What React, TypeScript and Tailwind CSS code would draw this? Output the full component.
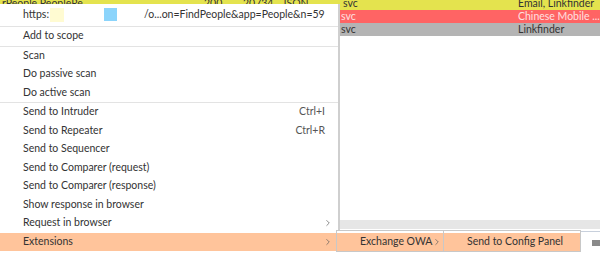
import { ChevronRight } from 'lucide-react'

type Item = { label: string; shortcut?: string; sub?: boolean; active?: boolean }

const groups: Item[][] = [
  [{ label: 'Add to scope' }],
  [{ label: 'Scan' }, { label: 'Do passive scan' }, { label: 'Do active scan' }],
  [
    { label: 'Send to Intruder', shortcut: 'Ctrl+I' },
    { label: 'Send to Repeater', shortcut: 'Ctrl+R' },
    { label: 'Send to Sequencer' },
    { label: 'Send to Comparer (request)' },
    { label: 'Send to Comparer (response)' },
    { label: 'Show response in browser' },
    { label: 'Request in browser', sub: true },
    { label: 'Extensions', sub: true, active: true },
  ],
]

const font = { fontFamily: 'Lato, "Noto Sans", sans-serif' }

function Arrow() {
  return <ChevronRight size={10} strokeWidth={1.6} className="shrink-0 text-[#555]" />
}

function MenuRow({ item }: { item: Item }) {
  return (
    <div
      className={`flex h-[18.5px] items-center whitespace-nowrap pl-[23px] pr-[5px] ${
        item.active ? 'bg-[#ffc49b]' : ''
      }`}
    >
      <span className="flex-1">{item.label}</span>
      {item.shortcut && <span className="pr-[8px] text-[#555]">{item.shortcut}</span>}
      {item.sub && <Arrow />}
    </div>
  )
}

export default function App() {
  return (
    <div
      className="relative h-[253px] w-[600px] overflow-hidden bg-white text-[10.5px] text-[#333]"
      style={font}
    >
      {/* table behind the menu */}
      <div className="flex flex-col whitespace-nowrap">
        <div className="-mt-[3px] flex h-[13px] items-center bg-[#e4e34e] text-[#333]">
          <span className="w-[204px] pl-[2px]">rPeople PeopleRe</span>
          <span className="w-[39px]">200</span>
          <span className="w-[39px]">20734</span>
          <span className="w-[59px]">JSON</span>
          <span className="w-[177px] pl-[2px]">svc</span>
          <span>Email, Linkfinder</span>
        </div>
        <div className="flex h-[13px] items-center bg-[#ff6464] pl-[341px] text-[#ffe0e0]">
          <span className="w-[177px]">svc</span>
          <span>Chinese Mobile ...</span>
        </div>
        <div className="flex h-[13px] items-center bg-[#b4b4b4] pl-[341px] text-[#333]">
          <span className="w-[177px]">svc</span>
          <span>Linkfinder</span>
        </div>
        <div className="h-[184px]" />
        <div className="ml-[340px] h-[9px] bg-[#e6e6e6]" />
        <div className="flex h-[24px] justify-end">
          <div className="mt-[2px] flex w-[20px] items-start border-t border-[#c8d0dc] pt-[8px]">
            <div className="ml-auto h-[6px] w-[8px] bg-[#8a8a8a]" />
          </div>
        </div>
      </div>

      {/* context menu */}
      <div className="absolute left-0 top-[4px] w-[340px] border-r-2 border-[#cfcfcf] bg-white">
        <div className="flex h-[22px] items-center whitespace-nowrap">
          <span className="pl-[23px]">https:</span>
          <span className="ml-[1px] h-[14px] w-[14px] bg-[#fffbd2]" />
          <span className="-mt-[1px] ml-[40px] h-[13px] w-[13px] bg-[#8bd4fb]" />
          <span className="ml-[27px]">/o...on=FindPeople&amp;app=People&amp;n=59</span>
        </div>
        {groups.map((g, i) => (
          <div key={i} className="border-t border-[#e3e3e3]">
            {g.map((item) => (
              <MenuRow key={item.label} item={item} />
            ))}
          </div>
        ))}
      </div>

      {/* submenus */}
      <div className="absolute left-[336px] top-[230px] w-[108px] border border-[#c8c8c8] bg-white pt-[2px]">
        <div className="flex h-[18px] items-center whitespace-nowrap bg-[#ffc49b] pl-[23px] pr-[3px]">
          <span className="flex-1">Exchange OWA</span>
          <Arrow />
        </div>
      </div>
      <div className="absolute left-[443px] top-[230px] w-[138px] border border-[#c8c8c8] bg-white pt-[2px]">
        <div className="flex h-[18px] items-center whitespace-nowrap bg-[#ffc49b] pl-[23px]">
          <span>Send to Config Panel</span>
        </div>
      </div>
    </div>
  )
}
